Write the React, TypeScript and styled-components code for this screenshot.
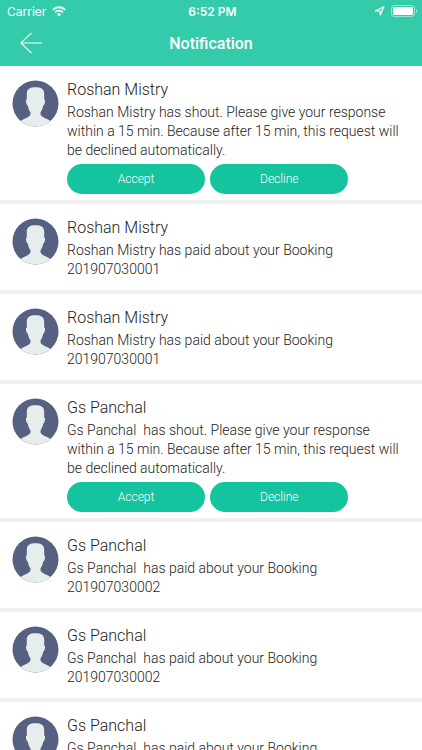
import React from "react";
import styled, { createGlobalStyle } from "styled-components";

const GlobalStyle = createGlobalStyle`
  *, *::before, *::after { box-sizing: border-box; }
  html, body, #root { height: 100%; margin: 0; }
  body {
    background: #fff;
    color: #1c1c1c;
    font-family: Roboto, "Noto Sans", sans-serif;
    font-weight: 300;
  }
  button { font: inherit; border: 0; margin: 0; padding: 0; cursor: pointer; }
  h1, h2, p, ul { margin: 0; padding: 0; }
`;

const Screen = styled.div`
  display: flex;
  flex-direction: column;
  height: 100%;
  overflow: hidden;
`;

const Header = styled.header`
  flex: none;
  background: #33cbaa;
  color: #fff;
`;

const StatusBar = styled.div`
  display: grid;
  grid-template-columns: 1fr auto 1fr;
  align-items: center;
  height: 22px;
  padding: 0 4px 0 7px;
  font-family: Inter, sans-serif;
  font-size: 12px;
  font-weight: 400;
`;

const StatusGroup = styled.div<{ $end?: boolean }>`
  display: flex;
  align-items: center;
  justify-content: ${(p) => (p.$end ? "flex-end" : "flex-start")};
  gap: 6px;
`;

const Clock = styled.time`
  font-weight: 600;
`;

const NavBar = styled.div`
  display: grid;
  grid-template-columns: 62px 1fr 62px;
  align-items: center;
  height: 44px;
`;

const BackButton = styled.button`
  display: flex;
  align-items: center;
  justify-content: center;
  height: 42px;
  margin-bottom: 2px;
  background: none;
  color: #fff;
`;

const Title = styled.h1`
  text-align: center;
  font-size: 16px;
  font-weight: 500;
  line-height: 20px;
`;

const List = styled.ul`
  flex: 1;
  min-height: 0;
  overflow: hidden;
  list-style: none;
`;

const Row = styled.li<{ $actions: boolean }>`
  display: flex;
  align-items: flex-start;
  gap: 8px;
  padding: 13px 16px ${(p) => (p.$actions ? 6 : 11)}px 12px;
  border-bottom: 4px solid #f0f0f2;
`;

const AvatarIcon = styled.svg`
  flex: none;
  display: block;
  width: 47px;
  height: 47px;
  margin-top: 1px;
`;

const Body = styled.div`
  flex: 1;
  min-width: 0;
`;

const Name = styled.h2`
  font-size: 16px;
  font-weight: 300;
  line-height: 22px;
  margin-bottom: 2px;
`;

const Message = styled.p`
  font-size: 14px;
  line-height: 19px;
  white-space: pre-wrap;
`;

const Actions = styled.div`
  display: grid;
  grid-template-columns: 1fr 1fr;
  gap: 5px;
  width: 83%;
  margin-top: 4px;
`;

const ActionButton = styled.button`
  height: 30px;
  border-radius: 15px;
  background: #13c49e;
  color: #fff;
  font-size: 12px;
  font-weight: 300;
`;

function Avatar() {
  return (
    <AvatarIcon viewBox="0 0 47 47" aria-hidden="true">
      <defs>
        <clipPath id="avatar-circle">
          <circle cx="23.5" cy="23.5" r="23" />
        </clipPath>
      </defs>
      <circle cx="23.5" cy="23.5" r="23" fill="#566080" />
      <path
        clipPath="url(#avatar-circle)"
        fill="#e7eced"
        d="M23.500 7.200C29 7.200 32.200 8.800 32.200 14v5.500c1.200.2.900 2.200.5 3.700-.3 1.300-.8 2.200-1.500 2.300-.5 3.100-1.500 5.300-2.700 7v1.500c.4 2.600 4 3.800 7 5.300l4.500 2.700v5.500H7V42l4.500-2.700c3-1.500 6.600-2.700 7-5.300v-1.500c-1.200-1.700-2.200-3.900-2.700-7-.7-.1-1.200-1-1.500-2.300-.4-1.500-.7-3.500.5-3.700V14c0-5.200 3.200-6.800 8.700-6.800z"
      />
    </AvatarIcon>
  );
}

function WifiIcon() {
  return (
    <svg width="14" height="11" viewBox="0 0 14 11" fill="none" stroke="#fff" aria-hidden="true">
      <path d="M.8 3.800a8.800 8.800 0 0 1 12.400 0" strokeWidth="1.900" />
      <path d="M3.100 6.300a5.500 5.500 0 0 1 7.800 0" strokeWidth="1.800" />
      <path d="M7 10.500 4.900 8.400a3 3 0 0 1 4.200 0z" fill="#fff" stroke="none" />
    </svg>
  );
}

function LocationIcon() {
  return (
    <svg width="11" height="10" viewBox="0 0 11 10" fill="none" stroke="#fff" aria-hidden="true">
      <path d="M9.900.7 6.200 9V5H1.300z" strokeWidth="1.200" strokeLinejoin="round" />
    </svg>
  );
}

function BatteryIcon() {
  return (
    <svg width="27" height="12" viewBox="0 0 27 12" aria-hidden="true">
      <rect x=".5" y=".5" width="23" height="11" rx="2.800" fill="none" stroke="#fff" strokeOpacity=".5" />
      <rect x="2" y="2" width="20" height="8" rx="1.300" fill="#fff" />
      <path d="M25 4c1.600.5 1.600 3.500 0 4z" fill="#fff" fillOpacity=".5" />
    </svg>
  );
}

function ArrowIcon() {
  return (
    <svg width="22" height="22" viewBox="0 0 22 22" fill="none" stroke="currentColor" aria-hidden="true">
      <path d="M11.500.8.900 11l10.600 10.200M.9 11H22" strokeWidth="1.100" />
    </svg>
  );
}

type Notification = { name: string; text: string; actions: boolean };

const shout = (name: string, sender: string): Notification => ({
  name,
  text: `${sender} has shout. Please give your response within a 15 min. Because after 15 min, this request will be declined automatically.`,
  actions: true,
});

const paid = (name: string, sender: string, booking: string): Notification => ({
  name,
  text: `${sender} has paid about your Booking ${booking}`,
  actions: false,
});

const notifications: Notification[] = [
  shout("Roshan Mistry", "Roshan Mistry"),
  paid("Roshan Mistry", "Roshan Mistry", "201907030001"),
  paid("Roshan Mistry", "Roshan Mistry", "201907030001"),
  shout("Gs Panchal", "Gs Panchal "),
  paid("Gs Panchal", "Gs Panchal ", "201907030002"),
  paid("Gs Panchal", "Gs Panchal ", "201907030002"),
  paid("Gs Panchal", "Gs Panchal ", "201907030002"),
];

export default function App() {
  return (
    <Screen>
      <GlobalStyle />
      <Header>
        <StatusBar>
          <StatusGroup>
            <span>Carrier</span>
            <WifiIcon />
          </StatusGroup>
          <Clock>6:52 PM</Clock>
          <StatusGroup $end>
            <LocationIcon />
            <BatteryIcon />
          </StatusGroup>
        </StatusBar>
        <NavBar>
          <BackButton type="button" aria-label="Back">
            <ArrowIcon />
          </BackButton>
          <Title>Notification</Title>
        </NavBar>
      </Header>
      <List>
        {notifications.map((item, index) => (
          <Row key={index} $actions={item.actions}>
            <Avatar />
            <Body>
              <Name>{item.name}</Name>
              <Message>{item.text}</Message>
              {item.actions && (
                <Actions>
                  <ActionButton type="button">Accept</ActionButton>
                  <ActionButton type="button">Decline</ActionButton>
                </Actions>
              )}
            </Body>
          </Row>
        ))}
      </List>
    </Screen>
  );
}
